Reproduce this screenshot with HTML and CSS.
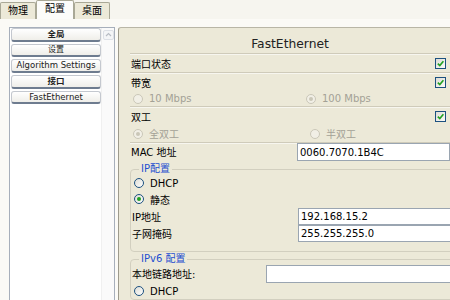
FILE: index.html
```html
<!DOCTYPE html>
<html lang="zh">
<head>
  <meta charset="UTF-8" />
  <title>FastEthernet 配置</title>
  <link rel="stylesheet" href="styles.css">
</head>
<body>
  <div class="tabs">
    <span class="tab">物理</span>
    <span class="tab active">配置</span>
    <span class="tab">桌面</span>
  </div>

  <div class="main">
    <div class="side">
      <div class="listbox">
        <div class="items">
          <div class="item head">全局</div>
          <div class="item small">设置</div>
          <div class="item">Algorithm Settings</div>
          <div class="item head">接口</div>
          <div class="item">FastEthernet</div>
        </div>
        <div class="scroll">
          <span class="arrow">
            <svg viewBox="0 0 9 7" width="9" height="7"><path d="M2 5l2.5-2.5L7 5" stroke="#b8bcc4" stroke-width="1.2" fill="none"/></svg>
          </span>
        </div>
      </div>
    </div>

    <div class="panel">
      <div class="title">FastEthernet</div>

      <div class="group">
        <div class="row">
          <span>端口状态</span>
          <span class="check"><svg viewBox="0 0 9 9" width="9" height="9"><path d="M1.8 4.6l2 2L7.4 2.2" stroke="#21a121" stroke-width="1.6" fill="none"/></svg></span>
        </div>
      </div>

      <div class="group">
        <div class="row">
          <span>带宽</span>
          <span class="check"><svg viewBox="0 0 9 9" width="9" height="9"><path d="M1.8 4.6l2 2L7.4 2.2" stroke="#21a121" stroke-width="1.6" fill="none"/></svg></span>
        </div>
        <div class="row radios short">
          <label class="opt first"><span class="radio off"></span>10 Mbps</label>
          <label class="opt"><span class="radio off dot"></span>100 Mbps</label>
        </div>
      </div>

      <div class="group">
        <div class="row">
          <span>双工</span>
          <span class="check"><svg viewBox="0 0 9 9" width="9" height="9"><path d="M1.8 4.6l2 2L7.4 2.2" stroke="#21a121" stroke-width="1.6" fill="none"/></svg></span>
        </div>
        <div class="row radios">
          <label class="opt first duplex"><span class="radio off dot"></span>全双工</label>
          <label class="opt"><span class="radio off"></span>半双工</label>
        </div>
      </div>

      <div class="group">
        <div class="field mac">
          <span class="label">MAC 地址</span>
          <input type="text" value="0060.7070.1B4C">
        </div>
      </div>

      <fieldset class="box ip">
        <legend>IP配置</legend>
        <label class="choice"><span class="radio"></span>DHCP</label>
        <label class="choice"><span class="radio on"></span>静态</label>
        <div class="field">
          <span class="label">IP地址</span>
          <input type="text" value="192.168.15.2">
        </div>
        <div class="field">
          <span class="label">子网掩码</span>
          <input type="text" value="255.255.255.0">
        </div>
      </fieldset>

      <fieldset class="box ipv6">
        <legend>IPv6 配置</legend>
        <div class="field link">
          <span class="label">本地链路地址:</span>
          <input type="text" value="">
        </div>
        <label class="choice"><span class="radio"></span>DHCP</label>
      </fieldset>
    </div>
  </div>
</body>
</html>
```

FILE: styles.css
```css
html, body {
  margin: 0;
  width: 450px;
  height: 300px;
  overflow: hidden;
}
body {
  background-color: #fbfaf6;
  font-family: "DejaVu Sans", "Noto Sans CJK SC", sans-serif;
  font-size: 10px;
  color: #000;
}
.tabs {
  display: flex;
  align-items: flex-end;
  height: 19px;
  background-color: #f6f5ef;
}
.tab {
  height: 16px;
  line-height: 15px;
  padding: 0 7px;
  background-color: #ece9d8;
  border: 1px solid #a9a896;
  border-bottom: none;
  border-radius: 2px 2px 0 0;
}
.tab.active {
  height: 18px;
  line-height: 16px;
  padding: 0 8px;
  background-color: #fcfcfa;
}
.main {
  display: flex;
  height: 281px;
  overflow: hidden;
}
.side {
  padding: 8px 0 0 9px;
}
.listbox {
  display: flex;
  box-sizing: border-box;
  width: 106px;
  height: 273px;
  border: 1px solid #a7afbb;
  border-bottom: none;
  background: #fff;
}
.items {
  width: 90px;
  padding: 0 0 0 1px;
}
.item {
  height: 10.5px;
  line-height: 10.5px;
  margin-bottom: 2.2px;
  text-align: center;
  font-size: 8.5px;
  color: #222;
  background: linear-gradient(#ffffff, #efeee9);
  border: 1px solid #c4c8cf;
  border-bottom: 2px solid #6e7c8f;
  border-radius: 3px;
}
.item.head {
  font-weight: bold;
}
.item.small {
  font-size: 8px;
}
.scroll {
  flex: 1;
  background: #fafafa;
  border-left: 1px solid #f0f0f0;
  padding: 2px 0 0 1px;
}
.arrow {
  display: block;
  width: 9px;
  height: 8px;
  border: 1px solid #dde0e6;
  border-radius: 2px;
  background: #f4f5f7;
}
.arrow svg {
  display: block;
}
.panel {
  flex: 1;
  margin: 8px 0 0 3px;
  padding: 0 0 0 11px;
  background-color: #ece9d8;
  border-top: 1px solid #b9b6a6;
  border-left: 1px solid #9d9a8c;
  border-top-left-radius: 3px;
  overflow: hidden;
}
.title {
  margin-top: 8px;
  height: 17px;
  line-height: 17px;
  text-align: center;
  font-size: 12.3px;
  color: #222;
}
.group {
  border-top: 1px solid #cfcbba;
  box-shadow: inset 0 1px #f7f6ef;
}
.row {
  display: flex;
  justify-content: space-between;
  align-items: center;
  height: 18px;
  padding-left: 1px;
}
.row.radios {
  justify-content: flex-start;
  height: 17px;
  color: #a3a196;
}
.row.radios.short {
  height: 15px;
}
.opt {
  display: flex;
  align-items: center;
}
.opt.first {
  width: 173px;
}
.opt.first.duplex {
  width: 177px;
}
.check {
  width: 9px;
  height: 9px;
  margin-right: 4px;
  border: 1px solid #1c5180;
  background: linear-gradient(135deg, #dcdcd5, #fbfbf9);
}
.check svg {
  display: block;
}
.radio {
  position: relative;
  display: inline-block;
  box-sizing: border-box;
  width: 10px;
  height: 10px;
  margin: 0 6px 0 2px;
  border: 1px solid #1c5180;
  border-radius: 50%;
  background: linear-gradient(135deg, #dcdcd5, #ffffff);
}
.radio.off {
  border-color: #cac7b8;
  background: #f1efe6;
}
.radio.on::after,
.radio.dot::after {
  content: "";
  position: absolute;
  left: 2px;
  top: 2px;
  width: 4px;
  height: 4px;
  border-radius: 50%;
  background: #21a121;
}
.radio.dot::after {
  background: #cac7b8;
}
.field {
  display: flex;
  align-items: center;
  height: 17px;
  padding-left: 1px;
}
.field.mac {
  height: 19px;
  align-items: flex-start;
}
.field.mac .label {
  line-height: 19px;
}
.label {
  width: 166px;
  flex-shrink: 0;
}
.field.link .label {
  width: 134px;
}
input {
  box-sizing: border-box;
  width: 200px;
  height: 17px;
  margin: 0;
  padding: 0 2px;
  border: 1px solid #9aa5b1;
  font-family: "DejaVu Sans", sans-serif;
  font-size: 10px;
  color: #000;
  background: #fff;
}
.field.mac input {
  height: 18px;
}
.field.link input {
  height: 18px;
}
.box {
  margin: 0 -20px 0 0;
  padding: 0 0 9px 0;
  border: 1px solid #d2cfbf;
  border-radius: 4px;
}
.box legend {
  margin-left: 8px;
  padding: 0 2px;
  line-height: 12px;
  color: #1e4fd0;
}
.box.ip {
  margin-top: 1px;
}
.box.ipv6 {
  margin-top: 1px;
  padding-bottom: 0;
}
.choice {
  display: flex;
  align-items: center;
  height: 16px;
  padding-left: 1px;
}
.ip .field:first-of-type {
  margin-top: 1px;
}
.ipv6 .field {
  height: 19px;
  margin-top: -1px;
}
```
